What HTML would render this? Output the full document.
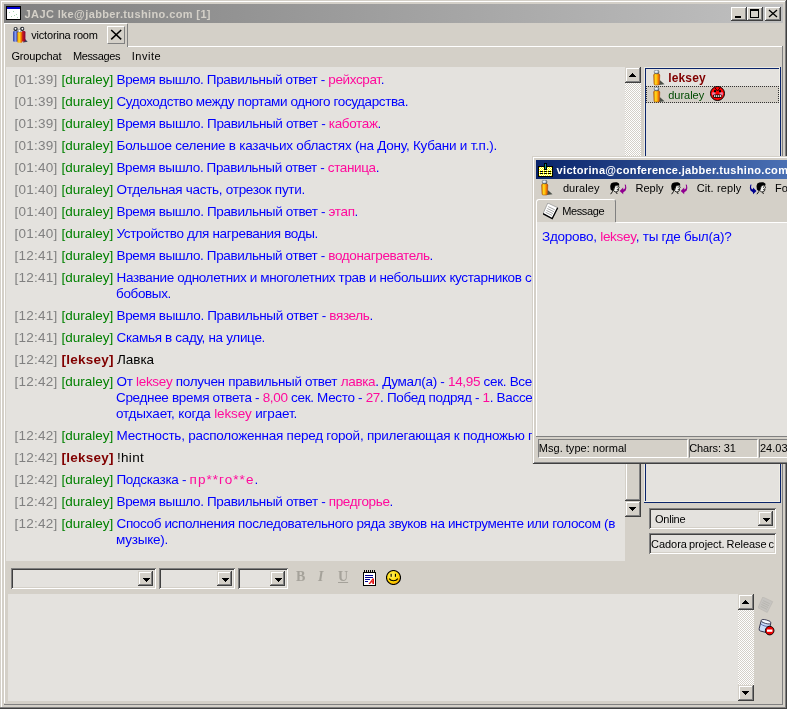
<!DOCTYPE html>
<html><head><meta charset="utf-8"><title>JAJC</title>
<style>
html,body{margin:0;padding:0}
body{width:787px;height:709px;overflow:hidden;background:#D4D0C8;position:relative;font-family:"Liberation Sans","DejaVu Sans",sans-serif;font-size:11px;color:#000}
.a{position:absolute}
.t{position:absolute;white-space:nowrap;line-height:14px}
.c{position:absolute;white-space:nowrap;font-size:13.5px;line-height:16px;color:#0000FF;left:15px}
.c i{font-style:normal;color:#808080;display:inline-block;width:46.5px;letter-spacing:.25px;margin-left:-.5px}
.c u{text-decoration:none;color:#008000;display:inline-block;width:55px;margin-left:0.5px;letter-spacing:0}
.c b{color:#800000;display:inline-block;width:55.5px;margin-left:0.5px;letter-spacing:.25px}
.c em{font-style:normal;color:#FF0A9C}
.c s{text-decoration:none;color:#000}
.c.w{left:116px}
.btn{position:absolute;background:#D4D0C8;box-shadow:inset -1px -1px 0 #404040,inset 1px 1px 0 #fff,inset -2px -2px 0 #808080}
.sunk{position:absolute;background:#E4E2DE;box-shadow:inset 1px 1px 0 #808080,inset -1px -1px 0 #fff,inset 2px 2px 0 #404040,inset -2px -2px 0 #D4D0C8}
.sb{position:absolute;background:#D4D0C8;box-shadow:inset -1px -1px 0 #404040,inset 1px 1px 0 #D4D0C8,inset -2px -2px 0 #808080,inset 2px 2px 0 #fff}
.dither{position:absolute;background-color:#EAE8E4;background-image:conic-gradient(#fff 25%,#D4D0C8 0 50%,#fff 0 75%,#D4D0C8 0);background-size:2px 2px}
</style></head><body>
<!-- main window frame -->
<div class="a" id="wrap" style="left:0;top:0;width:787px;height:709px;will-change:transform">
<div class="a" style="left:1px;top:1px;width:784px;height:1px;background:#fff"></div>
<div class="a" style="left:1px;top:1px;width:1px;height:706px;background:#fff"></div>
<div class="a" style="left:0;top:707px;width:787px;height:1px;background:#808080"></div>
<div class="a" style="left:0;top:708px;width:787px;height:1px;background:#404040"></div>
<div class="a" style="left:785px;top:1px;width:1px;height:707px;background:#808080"></div>
<div class="a" style="left:786px;top:0;width:1px;height:709px;background:#404040"></div>
<!-- title bar -->
<div class="a" id="title" style="left:4px;top:4px;width:779px;height:19px;background:linear-gradient(90deg,#808080,#C0C0C0)"></div>
<div class="t" style="left:24.6px;top:7px;font-weight:bold;color:#D4D0C8;letter-spacing:0.38px">JAJC lke@jabber.tushino.com [1]</div>

<!-- caption buttons -->
<div class="btn" style="left:731px;top:7px;width:16px;height:14px"></div>
<div class="a" style="left:735px;top:16px;width:6px;height:2px;background:#000"></div>
<div class="btn" style="left:747px;top:7px;width:16px;height:14px"></div>
<div class="a" style="left:750px;top:9px;width:9px;height:9px;box-sizing:border-box;border:1px solid #000;border-top-width:2px"></div>
<div class="btn" style="left:765px;top:7px;width:16px;height:14px"></div>
<svg class="a" style="left:765px;top:7px" width="16" height="14"><path d="M4 3l8 7M12 3l-8 7" stroke="#000" stroke-width="1.300" fill="none"/></svg>
<!-- app icon -->
<!-- tab strip -->
<div class="a" style="left:4px;top:23px;width:123px;height:1px;background:#fff"></div>
<div class="a" style="left:4px;top:23px;width:1px;height:680px;background:#fff"></div>
<div class="a" style="left:127px;top:24px;width:1px;height:23px;background:#808080"></div>
<div class="a" style="left:128px;top:46px;width:655px;height:1px;background:#fff"></div>
<div class="a" style="left:782px;top:46px;width:1px;height:658px;background:#808080"></div>
<div class="a" style="left:4px;top:704px;width:779px;height:1px;background:#808080"></div>
<div class="t" style="left:31.2px;top:28px;letter-spacing:-0.18px">victorina room</div>
<div class="a" style="left:107px;top:26px;width:18px;height:18px;box-sizing:border-box;border:1px solid;border-color:#fff #808080 #808080 #fff"></div>
<svg class="a" style="left:107px;top:26px" width="18" height="18"><path d="M4.2 4l10 9.4M14.2 4l-10 9.4" stroke="#000" stroke-width="1.5" fill="none"/></svg>
<!-- menu -->
<div class="t" style="left:11.4px;top:49px;letter-spacing:-0.15px">Groupchat</div>
<div class="t" style="left:72.9px;top:49px;letter-spacing:-0.35px">Messages</div>
<div class="t" style="left:131.8px;top:49px;letter-spacing:0.5px">Invite</div>
<!-- chat area -->
<div class="a" id="chat" style="left:6px;top:67px;width:619px;height:494px;background:#E4E2DE"></div>

<!--CHAT-->
<div class="c" style="top:72px"><i>[01:39]</i><u>[duraley]</u><span class="m" style="letter-spacing:-0.369px">Время вышло. Правильный ответ - <em>рейхсрат</em>.</span></div>
<div class="c" style="top:94px"><i>[01:39]</i><u>[duraley]</u><span class="m" style="letter-spacing:-0.402px">Судоходство между портами одного государства.</span></div>
<div class="c" style="top:116px"><i>[01:39]</i><u>[duraley]</u><span class="m" style="letter-spacing:-0.352px">Время вышло. Правильный ответ - <em>каботаж</em>.</span></div>
<div class="c" style="top:138px"><i>[01:39]</i><u>[duraley]</u><span class="m" style="letter-spacing:-0.232px">Большое селение в казачьих областях (на Дону, Кубани и т.п.).</span></div>
<div class="c" style="top:160px"><i>[01:40]</i><u>[duraley]</u><span class="m" style="letter-spacing:-0.384px">Время вышло. Правильный ответ - <em>станица</em>.</span></div>
<div class="c" style="top:182px"><i>[01:40]</i><u>[duraley]</u><span class="m" style="letter-spacing:-0.283px">Отдельная часть, отрезок пути.</span></div>
<div class="c" style="top:204px"><i>[01:40]</i><u>[duraley]</u><span class="m" style="letter-spacing:-0.359px">Время вышло. Правильный ответ - <em>этап</em>.</span></div>
<div class="c" style="top:226px"><i>[01:40]</i><u>[duraley]</u><span class="m" style="letter-spacing:-0.347px">Устройство для нагревания воды.</span></div>
<div class="c" style="top:248px"><i>[12:41]</i><u>[duraley]</u><span class="m" style="letter-spacing:-0.367px">Время вышло. Правильный ответ - <em>водонагреватель</em>.</span></div>
<div class="c" style="top:270px"><i>[12:41]</i><u>[duraley]</u><span class="m" style="letter-spacing:-0.363px">Название однолетних и многолетних трав и небольших кустарников семейства</span></div>
<div class="c w" style="top:286px"><span class="m" style="letter-spacing:-0.357px">бобовых.</span></div>
<div class="c" style="top:308px"><i>[12:41]</i><u>[duraley]</u><span class="m" style="letter-spacing:-0.338px">Время вышло. Правильный ответ - <em>вязель</em>.</span></div>
<div class="c" style="top:330px"><i>[12:41]</i><u>[duraley]</u><span class="m" style="letter-spacing:-0.322px">Скамья в саду, на улице.</span></div>
<div class="c" style="top:352px"><i>[12:42]</i><b>[leksey]</b><span class="m" style="letter-spacing:-0.053px"><s>Лавка</s></span></div>
<div class="c" style="top:374px"><i>[12:42]</i><u>[duraley]</u><span class="m" style="letter-spacing:-0.316px">От <em>leksey</em> получен правильный ответ <em>лавка</em>. Думал(а) - <em>14,95</em> сек. Всего очков - <em>35</em>.</span></div>
<div class="c w" style="top:390px"><span class="m" style="letter-spacing:-0.326px">Среднее время ответа - <em>8,00</em> сек. Место - <em>27</em>. Побед подряд - <em>1</em>. Вассерман</span></div>
<div class="c w" style="top:406px"><span class="m" style="letter-spacing:-0.164px">отдыхает, когда <em>leksey</em> играет.</span></div>
<div class="c" style="top:428px"><i>[12:42]</i><u>[duraley]</u><span class="m" style="letter-spacing:-0.234px">Местность, расположенная перед горой, прилегающая к подножью горы.</span></div>
<div class="c" style="top:450px"><i>[12:42]</i><b>[leksey]</b><span class="m" style="letter-spacing:0.294px"><s>!hint</s></span></div>
<div class="c" style="top:472px"><i>[12:42]</i><u>[duraley]</u><span class="m" style="letter-spacing:-0.333px">Подсказка - <em style="letter-spacing:1.05px">пр**го**е</em>.</span></div>
<div class="c" style="top:494px"><i>[12:42]</i><u>[duraley]</u><span class="m" style="letter-spacing:-0.355px">Время вышло. Правильный ответ - <em>предгорье</em>.</span></div>
<div class="c" style="top:516px"><i>[12:42]</i><u>[duraley]</u><span class="m" style="letter-spacing:-0.367px">Способ исполнения последовательного ряда звуков на инструменте или голосом (в</span></div>
<div class="c w" style="top:532px"><span class="m" style="letter-spacing:-0.236px">музыке).</span></div>
<!--/CHAT-->

<!-- chat scrollbar -->
<div class="dither" style="left:625px;top:67px;width:16px;height:450px"></div>
<div class="sb" style="left:625px;top:67px;width:16px;height:16px"></div>
<svg class="a" style="left:629px;top:73px" width="7" height="4"><use href="#au"/></svg>
<div class="sb" style="left:625px;top:300px;width:16px;height:201px"></div>
<div class="sb" style="left:625px;top:501px;width:16px;height:16px"></div>
<svg class="a" style="left:629px;top:507px" width="7" height="4"><use href="#ad"/></svg>
<!-- user list -->
<div class="a" style="left:644px;top:67px;width:137px;height:436px;background:#E4E2DE;box-shadow:inset -1px -1px 0 #0A246A,inset 1px 1px 0 #ECEAE2,inset -2px -2px 0 #F0EEE6,inset 2px 2px 0 #0A246A"></div>
<div class="a" style="left:646px;top:86px;width:133px;height:17px;box-sizing:border-box;background:#D4D0C8;border:1px dotted #333"></div>
<div class="t" style="left:668.2px;top:71px;font-weight:bold;color:#800000;font-size:12px;letter-spacing:.15px">leksey</div>
<div class="t" style="left:668.2px;top:88px;color:#004A00;letter-spacing:-0.01px">duraley</div>
<!-- status combo -->
<div class="sunk" style="left:649px;top:508px;width:127px;height:21px"></div>
<div class="sb" style="left:758px;top:511px;width:15px;height:15px"></div>
<svg class="a" style="left:763px;top:518px" width="7" height="4"><use href="#ad"/></svg>
<div class="t" style="left:655.0px;top:512px;letter-spacing:-0.24px">Online</div>
<div class="sunk" style="left:649px;top:533px;width:127px;height:21px"></div>
<div class="t" style="left:651.1px;top:537px;width:122.5px;overflow:hidden;word-spacing:-1px;letter-spacing:-0.05px">Cadora project. Release candidate</div>
<!-- format toolbar -->
<div class="sunk" style="left:11px;top:568px;width:145px;height:21px"></div>
<div class="sb" style="left:138px;top:571px;width:15px;height:15px"></div>
<svg class="a" style="left:143px;top:578px" width="7" height="4"><use href="#ad"/></svg>
<div class="sunk" style="left:159px;top:568px;width:76px;height:21px"></div>
<div class="sb" style="left:217px;top:571px;width:15px;height:15px"></div>
<svg class="a" style="left:222px;top:578px" width="7" height="4"><use href="#ad"/></svg>
<div class="sunk" style="left:238px;top:568px;width:50px;height:21px"></div>
<div class="sb" style="left:270px;top:571px;width:15px;height:15px"></div>
<svg class="a" style="left:275px;top:578px" width="7" height="4"><use href="#ad"/></svg>
<div class="t" style="left:296px;top:569px;font:bold 14px/16px 'Liberation Serif',serif;color:#A5A29A">B</div>
<div class="t" style="left:318px;top:569px;font:italic bold 14px/16px 'Liberation Serif',serif;color:#A5A29A">I</div>
<div class="t" style="left:338px;top:569px;font:bold 14px/16px 'Liberation Serif',serif;color:#A5A29A;text-decoration:underline">U</div>
<!-- input area -->
<div class="a" style="left:8px;top:594px;width:746px;height:107px;background:#E4E2DE"></div>
<div class="dither" style="left:738px;top:594px;width:16px;height:107px"></div>
<div class="sb" style="left:738px;top:594px;width:16px;height:16px"></div>
<svg class="a" style="left:742px;top:600px" width="7" height="4"><use href="#au"/></svg>
<div class="sb" style="left:738px;top:685px;width:16px;height:16px"></div>
<svg class="a" style="left:742px;top:691px" width="7" height="4"><use href="#ad"/></svg>

<!-- popup window -->
<div class="a" id="popup" style="left:532px;top:156px;width:300px;height:308px;background:#D4D0C8;box-shadow:inset 1px 1px 0 #D4D0C8,inset -1px -1px 0 #404040,inset 2px 2px 0 #fff,inset -2px -2px 0 #808080"></div>
<div class="a" style="left:536px;top:160px;width:251px;height:19px;background:linear-gradient(90deg,#0A246A,#4A70B4)"></div>
<div class="t" style="left:556.6px;top:163px;font-weight:bold;color:#fff;letter-spacing:0.32px">victorina@conference.jabber.tushino.com</div>
<!-- popup toolbar -->
<div class="t" style="left:562.9px;top:181px;letter-spacing:0.1px">duraley</div>
<div class="t" style="left:635.6px;top:181px;letter-spacing:-0.03px">Reply</div>
<div class="t" style="left:696.7px;top:181px;letter-spacing:0.14px">Cit. reply</div>
<div class="t" style="left:775px;top:181px">Forward</div>
<!-- popup tab -->
<div class="a" style="left:536px;top:199px;width:80px;height:24px;box-sizing:border-box;border:1px solid;border-color:#fff #808080 transparent #fff;border-radius:3px 3px 0 0;background:#D4D0C8"></div>
<div class="a" style="left:537px;top:222px;width:250px;height:214px;background:#E4E2DE"></div>
<div class="a" style="left:616px;top:222px;width:171px;height:1px;background:#fff"></div>
<div class="a" style="left:536px;top:222px;width:1px;height:215px;background:#fff"></div>
<div class="a" style="left:536px;top:436px;width:251px;height:1px;background:#808080"></div>
<div class="t" style="left:562.2px;top:204px;letter-spacing:-0.37px">Message</div>
<div class="c" style="left:542px;top:229px"><span class="m" style="letter-spacing:-.27px">Здорово, <em>leksey</em>, ты где был(а)?</span></div>
<!-- popup status bar -->
<div class="a" style="left:538px;top:439px;width:150px;height:19px;box-sizing:border-box;border:1px solid;border-color:#808080 #fff #fff #808080"></div>
<div class="a" style="left:689px;top:439px;width:69px;height:19px;box-sizing:border-box;border:1px solid;border-color:#808080 #fff #fff #808080"></div>
<div class="a" style="left:759px;top:439px;width:60px;height:19px;box-sizing:border-box;border:1px solid;border-color:#808080 #fff #fff #808080"></div>
<div class="t" style="left:538.8px;top:441px;letter-spacing:0.02px">Msg. type: normal</div>
<div class="t" style="left:689.2px;top:441px;letter-spacing:-0.13px">Chars: 31</div>
<div class="t" style="left:760px;top:441px">24.03.2005</div>

<!-- icons -->
<svg width="0" height="0" style="position:absolute"><defs>
<linearGradient id="gOr" x1="0" y1="0" x2="1" y2="0"><stop offset="0" stop-color="#E07800"/><stop offset=".35" stop-color="#FFE020"/><stop offset=".7" stop-color="#FF9000"/><stop offset="1" stop-color="#C04000"/></linearGradient>
<linearGradient id="gBl" x1="0" y1="0" x2="1" y2="0"><stop offset="0" stop-color="#3040A0"/><stop offset=".5" stop-color="#8098F0"/><stop offset="1" stop-color="#283080"/></linearGradient>
<linearGradient id="gRd" x1="0" y1="0" x2="1" y2="0"><stop offset="0" stop-color="#E02020"/><stop offset="1" stop-color="#800030"/></linearGradient>
<radialGradient id="gHd" cx=".4" cy=".4" r=".7"><stop offset="0" stop-color="#fff"/><stop offset=".5" stop-color="#B8C8E0"/><stop offset="1" stop-color="#303840"/></radialGradient>
<radialGradient id="gSm" cx=".4" cy=".35" r=".75"><stop offset="0" stop-color="#FFF060"/><stop offset=".6" stop-color="#FFD800"/><stop offset="1" stop-color="#F09000"/></radialGradient>
<g id="person"><path d="M6.800 10l4.700 4.200-5.500.8z" fill="#4A5048"/><path d="M.6 5.200Q.6 3.600 2.200 3.600H5Q6.800 3.600 6.800 5.200L6.400 14Q6.300 15 5.200 15H2.200Q1.100 15 1 14z" fill="url(#gOr)" stroke="#9A4800" stroke-width=".5"/><ellipse cx="3.600" cy="1.900" rx="2.500" ry="1.900" fill="url(#gHd)" stroke="#404848" stroke-width=".4"/></g>
<g id="head"><path d="M8 3l1.200 2.800-.8.700.2 1.500-1 1.600L5 10 3.600 8.400 4.800 4.600 6 3.300z" fill="#F4F4F0" stroke="#000" stroke-width=".8"/><path d="M1 1.500Q3 0 7 .3L9 1.500 9.300 3.500 8 3 6 3.300 4.800 4.600 3.800 6.200 3.600 8.400 2.400 9 .6 7.500.2 4z" fill="#000"/><rect x="6.700" y="4.600" width="1" height="1" fill="#000"/><path d="M6.800 7.700h1.200M2.800 9.200L.6 12.200M6.200 10.200l1 1.800" stroke="#000" stroke-width=".9" fill="none"/></g>
<g id="rarr"><path d="M5.200.3L6.400.6Q7.400 4 6.200 6.400L3.700 8.400V10.100L.2 6.700 3.700 3.400V5.200L5.400 4.400Q5.900 2.500 5.200.3z"/></g>
<pattern id="pYw" width="2" height="2" patternUnits="userSpaceOnUse"><rect width="2" height="2" fill="#FFFF00"/><rect width="1" height="1" fill="#fff"/><rect x="1" y="1" width="1" height="1" fill="#fff"/></pattern>
<path id="ad" d="M0 0h7v1h-7zM1 1h5v1h-5zM2 2h3v1h-3zM3 3h1v1h-1z" shape-rendering="crispEdges"/><path id="au" d="M3 0h1v1h-1zM2 1h3v1h-3zM1 2h5v1h-5zM0 3h7v1h-7z" shape-rendering="crispEdges"/>
<g id="doc"><path d="M4.800 0L14.700 4.700 9.200 15.500 0 10.700z"/></g>
</defs></svg>
<!-- app icon detail -->
<svg class="a" style="left:6px;top:6px" width="16" height="14" shape-rendering="crispEdges"><rect x=".5" y=".5" width="14" height="13" fill="#fff" stroke="#000"/><rect x="1" y="1" width="13" height="2" fill="#0000D0"/><g fill="#A8D8B0"><rect x="3" y="6" width="1" height="1"/><rect x="7" y="5" width="1" height="1"/><rect x="10" y="8" width="1" height="1"/><rect x="5" y="10" width="1" height="1"/><rect x="11" y="11" width="1" height="1"/><rect x="8" y="9" width="1" height="1"/></g></svg>
<!-- group icon on tab -->
<svg class="a" style="left:12px;top:26px" width="17" height="18"><path d="M12.500 12.500l3.200 3.200L11 16.500z" fill="#38405C"/><rect x="1" y="5" width="5" height="10.700" rx="1.200" fill="url(#gBl)"/><rect x="9.800" y="5" width="3.600" height="10.500" rx="1.200" fill="url(#gRd)"/><ellipse cx="3.600" cy="3" rx="2.100" ry="2.100" fill="#1C2028"/><circle cx="3.500" cy="2.800" r="1" fill="#fff"/><ellipse cx="10.200" cy="2.900" rx="2.100" ry="2.100" fill="#1C2028"/><circle cx="10.400" cy="2.700" r="1" fill="#fff"/><rect x="5.300" y="6" width="5" height="10.700" rx="1.300" fill="url(#gOr)"/><ellipse cx="7.500" cy="4.800" rx="1.500" ry="1.400" fill="#fff" stroke="#404850" stroke-width=".5"/></svg>
<!-- user list icons -->
<svg class="a" style="left:653px;top:70px" width="13" height="16"><use href="#person"/></svg>
<svg class="a" style="left:653px;top:87px" width="13" height="16"><use href="#person"/></svg>
<!-- angry smiley -->
<svg class="a" style="left:710px;top:86px" width="15" height="15"><circle cx="7.500" cy="7.500" r="7" fill="#FF0000" stroke="#000"/><rect x="2.200" y="6.300" width="3.200" height="3" fill="#F080A8"/><rect x="9.600" y="6.300" width="3.200" height="3" fill="#F080A8"/><rect x="4" y="4.200" width="2" height="2" fill="#000"/><rect x="9" y="4.200" width="2" height="2" fill="#000"/><path d="M5 2l2.500 3L10 2" fill="none" stroke="#000" stroke-width=".9"/><rect x="3.300" y="8.400" width="8.400" height="3.300" rx=".8" fill="#000"/><g fill="#fff"><rect x="4.200" y="9.100" width="1.100" height="1.900"/><rect x="6.200" y="9.100" width="1.100" height="1.900"/><rect x="8.200" y="9.100" width="1.100" height="1.900"/><rect x="10.100" y="9.100" width="1.100" height="1.900"/></g></svg>
<!-- popup title icon -->
<svg class="a" style="left:538px;top:163px" width="16" height="15" shape-rendering="crispEdges"><rect x=".5" y="3.500" width="14" height="10" fill="url(#pYw)" stroke="#000"/><rect x="6" y="0" width="3" height="7" fill="#000"/><rect x="7" y="1" width="1" height="5" fill="#009090"/><g fill="#000"><rect x="2" y="8" width="3" height="1"/><rect x="6" y="8" width="3" height="1"/><rect x="10" y="8" width="3" height="1"/><rect x="2" y="10" width="3" height="1"/><rect x="6" y="10" width="3" height="1"/><rect x="10" y="10" width="3" height="1"/></g></svg>
<!-- popup toolbar icons -->
<svg class="a" style="left:541px;top:180px" width="13" height="16"><use href="#person"/></svg>
<svg class="a" style="left:609.500px;top:181.500px" width="18" height="14"><use href="#head"/><use href="#rarr" x="9.500" y="2.200" fill="#900090"/></svg>
<svg class="a" style="left:670.500px;top:181.500px" width="18" height="14"><use href="#head"/><use href="#rarr" x="9.500" y="2.200" fill="#900090"/></svg>
<svg class="a" style="left:748.500px;top:181.500px" width="18" height="14"><use href="#head" x="7.300"/><g transform="translate(7.700,2.200) scale(-1,1)"><use href="#rarr" fill="#000090"/></g></svg>
<!-- popup tab doc icon -->
<svg class="a" style="left:543px;top:203px" width="16" height="17"><use href="#doc" fill="#fff" stroke="#999" stroke-width=".8"/><path d="M0 10.700L9.200 15.500 14.700 4.700" fill="none" stroke="#000" stroke-width="1.300"/><path d="M5.200 3.600l6.600 3.200M4.300 5.500l6.600 3.200M3.400 7.400l6.600 3.200M2.600 9.300l6.400 3.100" stroke="#909090" stroke-width=".8"/></svg>
<!-- notepad icon -->
<svg class="a" style="left:363px;top:570px" width="14" height="16" shape-rendering="crispEdges"><rect x=".5" y="2.500" width="12" height="13" fill="#fff" stroke="#000"/><g fill="#000"><rect x="1" y="0" width="1" height="2"/><rect x="3" y="0" width="1" height="2"/><rect x="5" y="0" width="1" height="2"/><rect x="7" y="0" width="1" height="2"/><rect x="9" y="0" width="1" height="2"/><rect x="11" y="0" width="1" height="2"/></g><g fill="#000090"><rect x="2" y="5" width="8" height="1"/><rect x="2" y="7" width="8" height="1"/><rect x="2" y="9" width="5" height="1"/><rect x="2" y="11" width="3" height="1"/></g><path d="M5.500 14l4-5.500h1.500V14h-1.600v-1.400H8L7.200 14zM8.600 11.300h.9V9.900z" fill="#E01010" shape-rendering="auto"/></svg>
<!-- yellow smiley -->
<svg class="a" style="left:386px;top:570px" width="15" height="15"><circle cx="7.500" cy="7.500" r="7" fill="url(#gSm)" stroke="#000" stroke-width="1.100"/><rect x="4.600" y="3.800" width="1.100" height="3" fill="#000"/><rect x="8.900" y="3.800" width="1.100" height="3" fill="#000"/><path d="M3.200 8.600c1.800 2.800 6.800 2.800 8.600 0" fill="none" stroke="#000" stroke-width="1.100"/></svg>
<!-- right-of-input icons -->
<svg class="a" style="left:758px;top:597px" width="16" height="17"><use href="#doc" fill="#C6C4C0" stroke="#B8B6B0" stroke-width=".6"/><path d="M5.200 3.600l6.600 3.200M4.300 5.500l6.600 3.200M3.400 7.400l6.600 3.200M2.600 9.300l6.400 3.100" stroke="#B4B2AC" stroke-width=".8"/></svg>
<svg class="a" style="left:758px;top:618px" width="18" height="18"><g transform="rotate(14 7 8)"><rect x="2" y="2.500" width="10" height="11.500" rx="2" fill="#C8DCF8" stroke="#303048" stroke-width=".9"/><ellipse cx="7" cy="3.600" rx="5" ry="1.800" fill="#F4F8FF" stroke="#303048" stroke-width=".8"/><path d="M2.500 7c2.500 1.400 6.500 1.400 9 0" fill="none" stroke="#5060A0" stroke-width=".8"/></g><circle cx="11.700" cy="12.600" r="4.300" fill="#F00000" stroke="#000" stroke-width=".9"/><rect x="9" y="11.500" width="5.400" height="2.300" fill="#fff"/></svg>



</div>
</body></html>
